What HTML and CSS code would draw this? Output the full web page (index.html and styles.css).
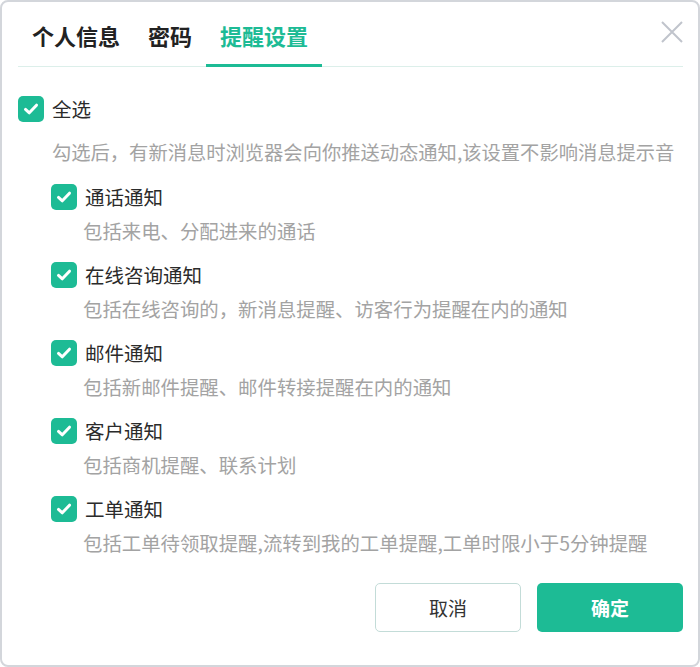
FILE: index.html
```html
<!DOCTYPE html>
<html lang="zh-CN">

<head>
    <meta charset="UTF-8" />
    <meta name="viewport" content="width=device-width, initial-scale=1.0" />
    <title>提醒设置</title>
    <link rel="stylesheet" href="styles.css">
</head>

<body>
    <div class="dialog">
        <div class="header">
            <div class="tabs">
                <div class="tab">个人信息</div>
                <div class="tab">密码</div>
                <div class="tab active">提醒设置</div>
            </div>
            <button class="close" title="关闭">
                <svg width="22" height="22" viewBox="0 0 22 22">
                    <path d="M1 1 L21 21 M21 1 L1 21" stroke="#c0c4cc" stroke-width="2" fill="none" />
                </svg>
            </button>
        </div>

        <div class="content">
            <label class="check-row">
                <span class="box"><svg width="18" height="18" viewBox="0 0 18 18"><path d="M3.5 9.4 L7.3 12.8 L14.5 5.2" stroke="#fff" stroke-width="3" fill="none" stroke-linecap="round" stroke-linejoin="round" /></svg></span>
                <span class="label">全选</span>
            </label>
            <p class="desc all-desc">勾选后，有新消息时浏览器会向你推送动态通知,该设置不影响消息提示音</p>

            <div class="items">
                <div class="item">
                    <label class="check-row">
                        <span class="box"><svg width="18" height="18" viewBox="0 0 18 18"><path d="M3.5 9.4 L7.3 12.8 L14.5 5.2" stroke="#fff" stroke-width="3" fill="none" stroke-linecap="round" stroke-linejoin="round" /></svg></span>
                        <span class="label">通话通知</span>
                    </label>
                    <p class="desc">包括来电、分配进来的通话</p>
                </div>
                <div class="item">
                    <label class="check-row">
                        <span class="box"><svg width="18" height="18" viewBox="0 0 18 18"><path d="M3.5 9.4 L7.3 12.8 L14.5 5.2" stroke="#fff" stroke-width="3" fill="none" stroke-linecap="round" stroke-linejoin="round" /></svg></span>
                        <span class="label">在线咨询通知</span>
                    </label>
                    <p class="desc">包括在线咨询的，新消息提醒、访客行为提醒在内的通知</p>
                </div>
                <div class="item">
                    <label class="check-row">
                        <span class="box"><svg width="18" height="18" viewBox="0 0 18 18"><path d="M3.5 9.4 L7.3 12.8 L14.5 5.2" stroke="#fff" stroke-width="3" fill="none" stroke-linecap="round" stroke-linejoin="round" /></svg></span>
                        <span class="label">邮件通知</span>
                    </label>
                    <p class="desc">包括新邮件提醒、邮件转接提醒在内的通知</p>
                </div>
                <div class="item">
                    <label class="check-row">
                        <span class="box"><svg width="18" height="18" viewBox="0 0 18 18"><path d="M3.5 9.4 L7.3 12.8 L14.5 5.2" stroke="#fff" stroke-width="3" fill="none" stroke-linecap="round" stroke-linejoin="round" /></svg></span>
                        <span class="label">客户通知</span>
                    </label>
                    <p class="desc">包括商机提醒、联系计划</p>
                </div>
                <div class="item">
                    <label class="check-row">
                        <span class="box"><svg width="18" height="18" viewBox="0 0 18 18"><path d="M3.5 9.4 L7.3 12.8 L14.5 5.2" stroke="#fff" stroke-width="3" fill="none" stroke-linecap="round" stroke-linejoin="round" /></svg></span>
                        <span class="label">工单通知</span>
                    </label>
                    <p class="desc">包括工单待领取提醒,流转到我的工单提醒,工单时限小于5分钟提醒</p>
                </div>
            </div>
        </div>

        <div class="footer">
            <button class="btn cancel">取消</button>
            <button class="btn ok">确定</button>
        </div>
    </div>
</body>

</html>
```

FILE: styles.css
```css
:root {
    --green: #1dbb95;
    --text: #2b2b2b;
    --gray: #a3a3a3;
    --border: #d3d6db;
}

* {
    box-sizing: border-box;
}

body {
    margin: 0;
    font-family: "Noto Sans CJK SC", "Noto Sans", sans-serif;
    color: var(--text);
    background: #fff;
}

.dialog {
    width: 700px;
    height: 667px;
    border: 2px solid var(--border);
    border-radius: 8px;
    background: #fff;
    display: flex;
    flex-direction: column;
}

.header {
    margin: 0 15px 0 16px;
    display: flex;
    justify-content: space-between;
    align-items: center;
    border-bottom: 1px solid #dcefea;
}

.tabs {
    display: flex;
}

.tab {
    padding: 18px 14px 14px;
    font-size: 22px;
    line-height: 30px;
    font-weight: 600;
    color: #222;
    border-bottom: 3px solid transparent;
    margin-bottom: -1px;
}

.tab.active {
    color: var(--green);
    border-bottom-color: var(--green);
}

.close {
    background: none;
    border: none;
    padding: 0;
    margin: 0 0 4px;
    cursor: pointer;
    line-height: 0;
}

.content {
    padding: 29px 0 0 16px;
}

.check-row {
    display: flex;
    align-items: center;
    height: 26px;
    gap: 8px;
}

.box {
    width: 26px;
    height: 26px;
    border-radius: 5px;
    background: var(--green);
    display: flex;
    align-items: center;
    justify-content: center;
}

.label {
    font-size: 19.5px;
    line-height: 26px;
    color: var(--text);
}

.desc {
    margin: 7px 0 17px 32px;
    font-size: 19.4px;
    line-height: 28px;
    color: var(--gray);
    white-space: nowrap;
}

.all-desc {
    margin: 16px 0 18px 34px;
    font-size: 19.3px;
}

.items {
    padding-left: 33px;
}

.item:last-child .desc {
    margin-bottom: 0;
}

.footer {
    display: flex;
    justify-content: flex-end;
    gap: 16px;
    padding: 26px 15px 0 0;
}

.btn {
    width: 146px;
    height: 49px;
    border-radius: 5px;
    font-family: inherit;
    font-size: 19px;
    cursor: pointer;
}

.cancel {
    background: #fff;
    border: 1.5px solid #c3dcd8;
    color: #333;
}

.ok {
    background: var(--green);
    border: none;
    color: #fff;
    font-weight: 600;
}
```
